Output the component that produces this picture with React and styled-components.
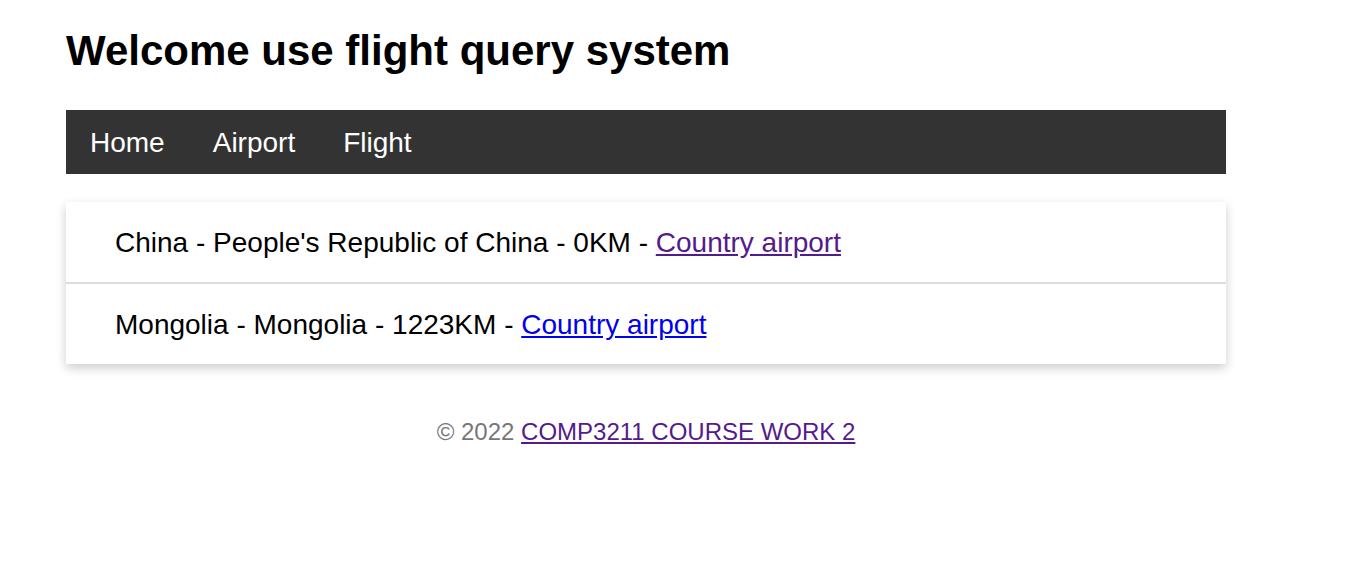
import styled, { createGlobalStyle } from 'styled-components'

const GlobalStyle = createGlobalStyle`
  body {
    margin: 0;
    background: #fff;
    font-family: 'Liberation Sans', Arial, sans-serif;
  }
`

const countries = [
  { name: 'China', full: "People's Republic of China", dist: 0, visited: true },
  { name: 'Mongolia', full: 'Mongolia', dist: 1223, visited: false },
]

const App = () => {
  return (
    <Page>
      <GlobalStyle />
      <Title>Welcome use flight query system</Title>
      <Nav>
        <NavLink>Home</NavLink>
        <NavLink>Airport</NavLink>
        <NavLink>Flight</NavLink>
      </Nav>
      <List>
        {countries.map((c) => (
          <Row key={c.name}>
            {c.name} - {c.full} - {c.dist}KM - <Link $visited={c.visited} href="#">Country airport</Link>
          </Row>
        ))}
      </List>
      <Footer>
        © 2022 <Link $visited href="#">COMP3211 COURSE WORK 2</Link>
      </Footer>
    </Page>
  )
}

const Page = styled.div`
  width: 1160px;
  margin-left: 66px;
  padding-top: 26px;
`

const Title = styled.h1`
  margin: 0;
  font-size: 42px;
  font-weight: bold;
  line-height: 50px;
  color: #000;
`

const Nav = styled.div`
  margin-top: 34px;
  height: 64px;
  padding-top: 2px;
  box-sizing: border-box;
  background: #333;
  display: flex;
  align-items: center;
  padding-left: 24px;
  gap: 48px;
`

const NavLink = styled.span`
  color: #fff;
  font-size: 28px;
`

const List = styled.div`
  margin-top: 28px;
  background: #fff;
  box-shadow: 0 4px 10px rgba(0, 0, 0, 0.2);
`

const Row = styled.div`
  height: 80px;
  box-sizing: border-box;
  padding-top: 2px;
  display: flex;
  align-items: center;
  white-space: pre;
  padding-left: 49px;
  font-size: 28px;
  color: #000;
  & + & {
    height: 82px;
    border-top: 2px solid #ddd;
  }
`

const Link = styled.a`
  color: ${(p) => (p.$visited ? '#551a8b' : '#0000ee')};
  text-decoration: underline;
`

const Footer = styled.div`
  margin-top: 54px;
  text-align: center;
  font-size: 24px;
  color: #777;
`

export default App
